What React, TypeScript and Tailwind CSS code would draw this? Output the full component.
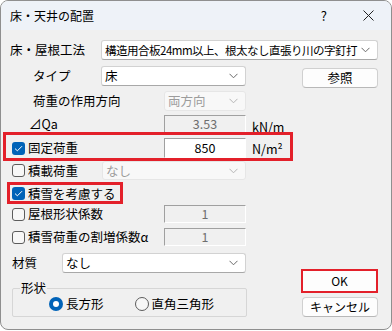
import React from "react";

const font = { fontFamily: '"Noto Sans CJK JP", "Noto Sans", sans-serif' };

function Chevron({ light }: { light?: boolean }) {
  return (
    <svg width="9" height="6" viewBox="0 0 9 6" className="shrink-0">
      <path d="M0.5 0.8 L4.5 4.8 L8.5 0.8" fill="none" stroke={light ? "#b5b5b5" : "#6a6a6a"} strokeWidth="1" />
    </svg>
  );
}

function Combo({
  text,
  w,
  h = 20,
  disabled,
  tight,
}: {
  text: string;
  w: string;
  h?: number;
  disabled?: boolean;
  tight?: boolean;
}) {
  return (
    <div
      className={`flex items-center justify-between rounded-[3px] border pl-[3px] pr-[7px] ${w} ${
        disabled ? "border-[#e6e6e6] bg-[#f8f8f8] text-[#9c9c9c]" : "border-[#d2d2d2] border-b-[#a8a8a8] bg-white text-black"
      }`}
      style={{ height: h }}
    >
      <span className={`whitespace-nowrap ${tight ? "text-[11.5px] tracking-[-0.5px]" : ""}`}>{text}</span>
      <Chevron light={disabled} />
    </div>
  );
}

function Box({ text, h = 18, active }: { text: string; h?: number; active?: boolean }) {
  return (
    <div
      className={`flex w-[82px] items-center justify-center border border-t-[#a0a0a0] border-l-[#a0a0a0] border-r-white border-b-white ${
        active ? "bg-white text-black" : "bg-[#f0f0f0] text-[#6e6e6e]"
      }`}
      style={{ height: h }}
    >
      {text}
    </div>
  );
}

function Check({ checked }: { checked?: boolean }) {
  return checked ? (
    <div className="flex h-[13px] w-[13px] shrink-0 items-center justify-center rounded-[3px] bg-[#0063b8]">
      <svg width="9" height="7" viewBox="0 0 9 7">
        <path d="M1 3.6 L3.4 5.8 L8 1.2" fill="none" stroke="white" strokeWidth="1" />
      </svg>
    </div>
  ) : (
    <div className="h-[13px] w-[13px] shrink-0 rounded-[3px] border border-[#5c5c5c] bg-[#f7f7f7]" />
  );
}

function Radio({ checked }: { checked?: boolean }) {
  return checked ? (
    <div className="flex h-[14px] w-[14px] items-center justify-center rounded-full bg-[#0063b8]">
      <div className="h-[6px] w-[6px] rounded-full bg-white" />
    </div>
  ) : (
    <div className="h-[14px] w-[14px] rounded-full border border-[#5c5c5c] bg-[#f7f7f7]" />
  );
}

function Button({ text }: { text: string }) {
  return (
    <div className="flex h-[20px] w-[76px] items-center justify-center rounded-[4px] border border-[#d0d0d0] border-b-[#b8b8b8] bg-[#fdfdfd] text-black">
      {text}
    </div>
  );
}

export default function App() {
  return (
    <div className="bg-white text-[12px] leading-[16px] text-black" style={font}>
      <div className="relative h-[330px] w-[392px] overflow-hidden rounded-[8px] border border-[#8f8f8f] bg-[#f0f0f0]">
        {/* title bar */}
        <div className="flex h-[29px] items-center bg-[#eef2f8] pl-[9px]">
          <span>床・天井の配置</span>
          <span className="ml-auto mr-[36px] text-[13px]">?</span>
          <svg width="11" height="11" viewBox="0 0 11 11" className="mr-[17px]">
            <path d="M0.5 0.5 L10.5 10.5 M10.5 0.5 L0.5 10.5" stroke="#222" strokeWidth="1" />
          </svg>
        </div>

        <div className="flex flex-col pt-[10px] text-[12.5px]">
          {/* 床・屋根工法 */}
          <div className="flex h-[26px] items-start">
            <div className="flex h-[20px] w-[100px] items-center pl-[9px]">床・屋根工法</div>
            <Combo text="構造用合板24mm以上、根太なし直張り川の字釘打" w="w-[277px]" tight />
          </div>

          {/* タイプ */}
          <div className="flex h-[25px] items-start">
            <div className="flex h-[20px] w-[100px] items-center pl-[32px]">タイプ</div>
            <Combo text="床" w="w-[145px]" />
            <div className="ml-[56px] mt-[2px]">
              <Button text="参照" />
            </div>
          </div>

          {/* 荷重の作用方向 */}
          <div className="flex h-[24px] items-start">
            <div className="flex h-[20px] w-[163px] items-center pl-[32px]">荷重の作用方向</div>
            <Combo text="両方向" w="w-[82px]" disabled />
          </div>

          {/* ⊿Qa */}
          <div className="flex h-[23px] items-start">
            <div className="flex h-[18px] w-[163px] items-center pl-[28px]">⊿Qa</div>
            <Box text="3.53" />
            <div className="ml-[6px] mt-[4px]">kN/m</div>
          </div>

          {/* 固定荷重 */}
          <div className="flex h-[23px] items-start">
            <div className="flex h-[20px] w-[163px] items-center gap-[3px] pl-[11px]">
              <Check checked />
              <span>固定荷重</span>
            </div>
            <Box text="850" h={20} active />
            <div className="ml-[6px] mt-[3px]">N/m²</div>
          </div>

          {/* 積載荷重 */}
          <div className="flex h-[21px] items-start">
            <div className="flex h-[19px] w-[101px] items-center gap-[3px] pl-[11px]">
              <Check />
              <span>積載荷重</span>
            </div>
            <Combo text="なし" w="w-[144px]" h={19} disabled />
          </div>

          {/* 積雪を考慮する */}
          <div className="flex h-[23px] items-center gap-[3px] pl-[11px]">
            <Check checked />
            <span>積雪を考慮する</span>
          </div>

          {/* 屋根形状係数 */}
          <div className="flex h-[23px] items-start">
            <div className="flex h-[18px] w-[163px] items-center gap-[3px] pl-[11px]">
              <Check />
              <span>屋根形状係数</span>
            </div>
            <Box text="1" />
          </div>

          {/* 積雪荷重の割増係数α */}
          <div className="flex h-[25px] items-start">
            <div className="flex h-[18px] w-[163px] items-center gap-[3px] pl-[11px]">
              <Check />
              <span>積雪荷重の割増係数α</span>
            </div>
            <Box text="1" />
          </div>

          {/* bottom */}
          <div className="flex">
            <div className="flex w-[246px] flex-col">
              <div className="flex h-[20px] items-center">
                <div className="w-[61px] pl-[11px]">材質</div>
                <Combo text="なし" w="w-[184px]" />
              </div>
              <div className="relative ml-[11px] mt-[15px] flex h-[29px] w-[235px] items-center rounded-[2px] border border-[#d6d6d6] pt-[3px]">
                <span className="absolute left-[7px] top-[-9px] bg-[#f0f0f0] px-[1px]">形状</span>
                <div className="ml-[36px] flex items-center gap-[3px]">
                  <Radio checked />
                  <span>長方形</span>
                </div>
                <div className="ml-[31px] flex items-center gap-[3px]">
                  <Radio />
                  <span>直角三角形</span>
                </div>
              </div>
            </div>
            <div className="ml-[54px] flex flex-col pt-[16px] text-[12px]">
              <div className="flex h-[24px] w-[77px] items-center justify-center border-[2px] border-[#e3202a] bg-[#fdfdfd]">
                OK
              </div>
              <div className="ml-[1px] mt-[4px]">
                <Button text="キャンセル" />
              </div>
            </div>
          </div>
        </div>

        {/* highlight rectangles */}
        <div className="pointer-events-none absolute left-[2px] top-[131px] h-[29px] w-[290px] border-[3px] border-[#e3202a]" />
        <div className="pointer-events-none absolute left-[6px] top-[181px] h-[22px] w-[116px] border-[3px] border-[#e3202a]" />
      </div>
    </div>
  );
}
